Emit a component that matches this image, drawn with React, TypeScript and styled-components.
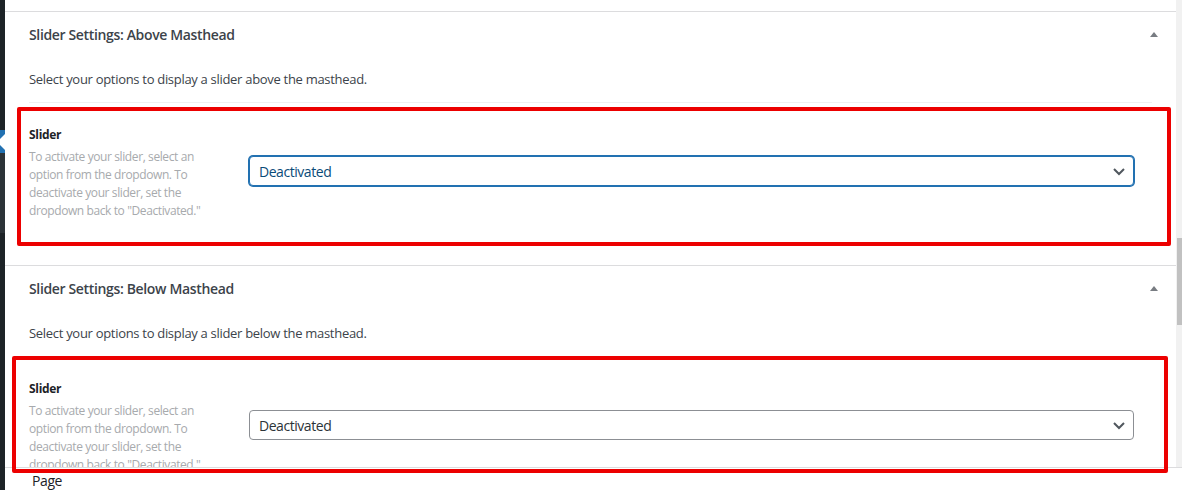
import React from 'react';
import styled, { createGlobalStyle } from 'styled-components';

const GlobalStyle = createGlobalStyle`
  html, body { margin: 0; padding: 0; background: #fff; }
  body {
    font-family: "Open Sans", "Noto Sans", "DejaVu Sans", sans-serif;
    color: #3c434a;
    -webkit-font-smoothing: antialiased;
  }
  * { box-sizing: border-box; }
`;

const Page = styled.div`
  position: relative;
  display: flex;
  width: 1182px;
  height: 490px;
  overflow: hidden;
  background: #fff;
`;

const AdminMenu = styled.nav`
  width: 5px;
  flex: none;
  display: flex;
  flex-direction: column;
  background: #1d2327;
`;

const MenuBlock = styled.div<{ $h: number; $bg: string }>`
  flex: none;
  height: ${(p) => p.$h}px;
  background: ${(p) => p.$bg};
`;

const MenuCurrent = styled.div`
  position: relative;
  flex: none;
  height: 23px;
  background: #2271b1;
  overflow: hidden;
  &::after {
    content: '';
    position: absolute;
    right: 0;
    top: 50%;
    margin-top: -8px;
    border: 8px solid transparent;
    border-right-color: #ffffff;
  }
`;

const Main = styled.main`
  flex: 1;
  display: flex;
  flex-direction: column;
  min-width: 0;
`;

const ScrollArea = styled.div`
  height: 468px;
  flex: none;
  display: flex;
  border-bottom: 1px solid #dcdcde;
`;

const Content = styled.div`
  flex: 1;
  overflow: hidden;
  padding-top: 11px;
`;

const Track = styled.div`
  width: 6px;
  flex: none;
  background: #f1f1f1;
  display: flex;
  flex-direction: column;
  padding-top: 238px;
`;

const Thumb = styled.div`
  height: 87px;
  margin-left: 1px;
  background: #c1c1c1;
`;

const Box = styled.section`
  border-top: 1px solid #dcdcde;
`;

const BoxHeader = styled.div`
  height: 45px;
  display: flex;
  align-items: center;
  justify-content: space-between;
  padding: 0 18px 0 24px;
`;

const Title = styled.h2`
  margin: 0;
  font-size: 14px;
  line-height: 20px;
  font-weight: 600;
  letter-spacing: -0.35px;
  color: #3c434a;
`;

const ToggleArrow = styled.span`
  width: 0;
  height: 0;
  border-left: 4px solid transparent;
  border-right: 4px solid transparent;
  border-bottom: 5px solid #787c82;
`;

const Inside = styled.div`
  padding: 0 24px;
`;

const Intro = styled.p`
  margin: 13px 0 14px;
  font-size: 13px;
  line-height: 18px;
  letter-spacing: -0.3px;
  color: #3c434a;
`;

const FieldRow = styled.div`
  display: flex;
  align-items: center;
  border-top: 1px solid #f0f0f1;
  padding: 23px 0 45px;
`;

const LabelCell = styled.div`
  width: 220px;
  flex: none;
`;

const FieldLabel = styled.div`
  margin-bottom: 4px;
  font-size: 12px;
  line-height: 18px;
  font-weight: 700;
  letter-spacing: -0.3px;
  color: #1d2327;
`;

const FieldDesc = styled.div`
  font-size: 12px;
  line-height: 18px;
  letter-spacing: -0.4px;
  color: #a7aaad;
  white-space: nowrap;
`;

const SelectCell = styled.div`
  flex: 1;
  padding: 0 18px 4px 0;
`;

const SelectBox = styled.div<{ $focused?: boolean }>`
  height: 30px;
  display: flex;
  align-items: center;
  justify-content: space-between;
  padding: 0 4px 0 9px;
  border-radius: 4px;
  font-size: 14px;
  letter-spacing: -0.45px;
  border: 1px solid ${(p) => (p.$focused ? '#2271b1' : '#8c8f94')};
  box-shadow: ${(p) => (p.$focused ? '0 0 0 1px #2271b1' : 'none')};
  color: ${(p) => (p.$focused ? '#0a4b78' : '#2c3338')};
  background: #fff;
`;

const PageRow = styled.div`
  padding: 3px 0 0 27px;
  font-size: 14px;
  line-height: 20px;
  letter-spacing: -0.4px;
  color: #1d2327;
`;

const Annotation = styled.div<{ $x: number; $y: number; $w: number; $h: number }>`
  position: absolute;
  left: ${(p) => p.$x}px;
  top: ${(p) => p.$y}px;
  width: ${(p) => p.$w}px;
  height: ${(p) => p.$h}px;
  border: 4px solid #ec0000;
  border-radius: 2px;
  pointer-events: none;
`;

const Chevron = () => (
  <svg width="20" height="20" viewBox="0 0 20 20" aria-hidden="true">
    <polyline points="5,8 10,13 15,8" fill="none" stroke="#50575e" strokeWidth="2" />
  </svg>
);

const SliderBox = ({ where, focused }: { where: string; focused?: boolean }) => (
  <Box>
    <BoxHeader>
      <Title>Slider Settings: {where === 'above' ? 'Above' : 'Below'} Masthead</Title>
      <ToggleArrow />
    </BoxHeader>
    <Inside>
      <Intro>Select your options to display a slider {where} the masthead.</Intro>
      <FieldRow>
        <LabelCell>
          <FieldLabel>Slider</FieldLabel>
          <FieldDesc>
            To activate your slider, select an
            <br />
            option from the dropdown. To
            <br />
            deactivate your slider, set the
            <br />
            dropdown back to "Deactivated."
          </FieldDesc>
        </LabelCell>
        <SelectCell>
          <SelectBox $focused={focused}>
            <span>Deactivated</span>
            <Chevron />
          </SelectBox>
        </SelectCell>
      </FieldRow>
    </Inside>
  </Box>
);

export default function App() {
  return (
    <Page>
      <GlobalStyle />
      <AdminMenu>
        <MenuBlock $h={130} $bg="#1d2327" />
        <MenuCurrent />
        <MenuBlock $h={80} $bg="#2c3338" />
      </AdminMenu>
      <Main>
        <ScrollArea>
          <Content>
            <SliderBox where="above" focused />
            <SliderBox where="below" />
          </Content>
          <Track>
            <Thumb />
          </Track>
        </ScrollArea>
        <PageRow>Page</PageRow>
      </Main>
      <Annotation $x={17} $y={107} $w={1154} $h={139} />
      <Annotation $x={12} $y={356} $w={1156} $h={117} />
    </Page>
  );
}
